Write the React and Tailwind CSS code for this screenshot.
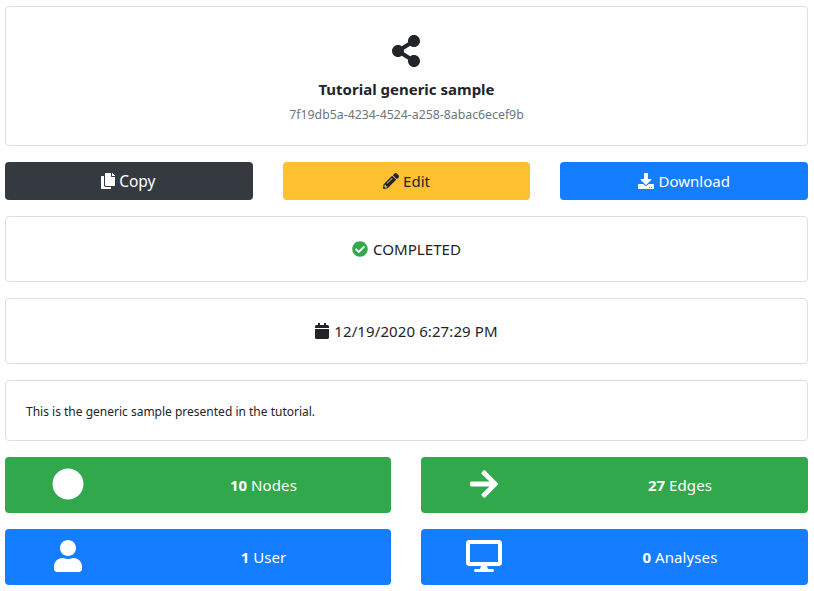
import {
  FaShareAlt,
  FaCopy,
  FaPencilAlt,
  FaDownload,
  FaCheckCircle,
  FaCalendar,
  FaCircle,
  FaArrowRight,
  FaUser,
  FaDesktop,
} from "react-icons/fa";

function Card({ className, children }) {
  return <section className={`rounded border border-[#dfdfdf] bg-white ${className}`}>{children}</section>;
}

function Action({ className, icon, children }) {
  return (
    <button className={`flex h-[38px] flex-1 items-center justify-center gap-1 rounded ${className}`}>
      {icon}
      {children}
    </button>
  );
}

function Stat({ className, icon, count, label }) {
  return (
    <div className={`flex h-14 items-center rounded text-white ${className}`}>
      <div className="flex w-[126px] justify-center pb-[2px]">{icon}</div>
      <div className="flex-1 pl-[5px] text-center">
        <b className="font-bold">{count}</b> <span className="tracking-[0.1px]">{label}</span>
      </div>
    </div>
  );
}

export default function App() {
  return (
    <main className="flex h-[591px] w-[814px] flex-col gap-4 bg-white pt-[6px] pr-[6px] pl-[5px] font-['Noto_Sans',sans-serif] text-[15px] leading-6 text-[#212529]">
      <Card className="flex h-[140px] flex-col items-center pt-7">
        <FaShareAlt className="mr-px h-8 w-7" />
        <h1 className="mt-[10px] text-[15px] font-bold">Tutorial generic sample</h1>
        <p className="mt-[2px] text-[12.3px] text-[#6c757d]">7f19db5a-4234-4524-a258-8abac6ecef9b</p>
      </Card>

      <div className="flex gap-[30px]">
        <Action className="bg-[#343a40] text-white" icon={<FaCopy className="h-4 w-[14px]" />}>
          <span className="pr-px text-[15.5px]">Copy</span>
        </Action>
        <Action className="bg-[#ffc12f]" icon={<FaPencilAlt className="size-4" />}>
          <span>Edit</span>
        </Action>
        <Action className="bg-[#157dff] text-white" icon={<FaDownload className="size-4" />}>
          <span>Download</span>
        </Action>
      </div>

      <Card className="flex h-[66px] items-center justify-center gap-[5px]">
        <FaCheckCircle className="size-4 text-[#31a84c]" />
        <span className="text-[15.1px]">COMPLETED</span>
      </Card>

      <Card className="flex h-[66px] items-center justify-center gap-[5px]">
        <FaCalendar className="h-4 w-[14px]" />
        <span className="tracking-[0.1px]">12/19/2020 6:27:29 PM</span>
      </Card>

      <Card className="flex h-[61px] items-center px-5 pt-[2px]">
        <p className="text-[12px]">This is the generic sample presented in the tutorial.</p>
      </Card>

      <div className="grid grid-cols-[386px_387px] gap-[30px]">
        <Stat className="bg-[#31a84c]" icon={<FaCircle className="size-8" />} count="10" label="Nodes" />
        <Stat className="bg-[#31a84c]" icon={<FaArrowRight className="h-8 w-7" />} count="27" label="Edges" />
      </div>

      <div className="grid grid-cols-[386px_387px] gap-[30px]">
        <Stat className="bg-[#157dff]" icon={<FaUser className="h-8 w-7" />} count="1" label="User" />
        <Stat className="bg-[#157dff]" icon={<FaDesktop className="h-8 w-9" />} count="0" label="Analyses" />
      </div>
    </main>
  );
}
